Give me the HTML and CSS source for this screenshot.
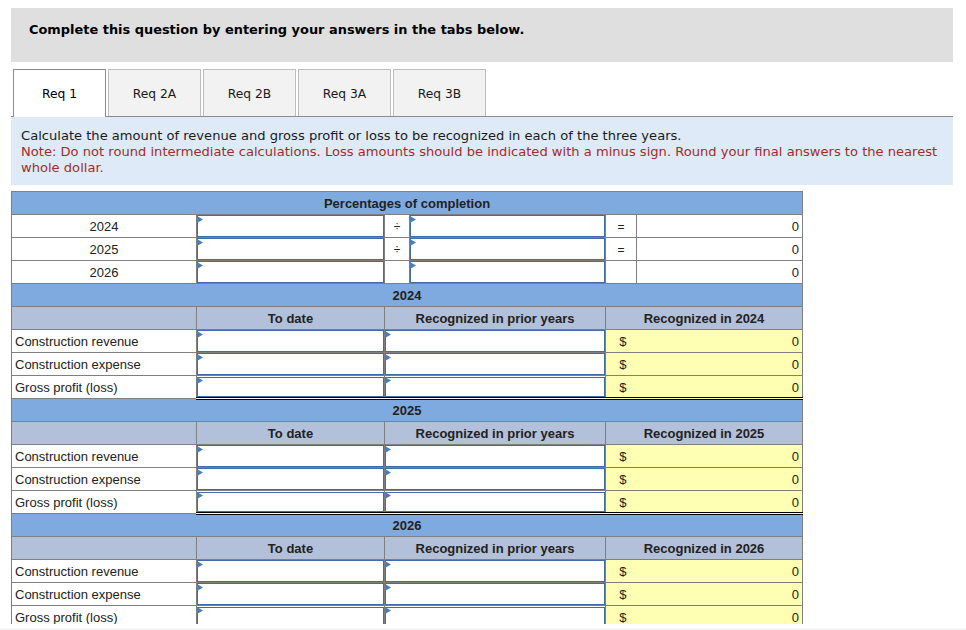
FILE: index.html
```html
<!DOCTYPE html>
<html lang="en">
<head>
<meta charset="utf-8">
<title>Req 1</title>
<link rel="stylesheet" href="styles.css">
</head>
<body>
<main class="page">
  <div class="banner">Complete this question by entering your answers in the tabs below.</div>
  <nav class="tabs">
    <div class="tab active">Req 1</div>
    <div class="tab">Req 2A</div>
    <div class="tab">Req 2B</div>
    <div class="tab">Req 3A</div>
    <div class="tab">Req 3B</div>
  </nav>
  <section class="prompt">
    <div>Calculate the amount of revenue and gross profit or loss to be recognized in each of the three years.</div>
    <div class="note">Note: Do not round intermediate calculations. Loss amounts should be indicated with a minus sign. Round your final answers to the nearest whole dollar.</div>
  </section>
  <table class="sheet">
    <colgroup>
      <col class="c1"><col class="c2"><col class="c3"><col class="c4"><col class="c5"><col class="c6">
    </colgroup>
    <tbody>
      <tr class="band"><td colspan="6">Percentages of completion</td></tr>
      <tr><td class="year">2024</td><td class="in"><input></td><td class="op">÷</td><td class="in"><input></td><td class="op">=</td><td class="num">0</td></tr>
      <tr><td class="year">2025</td><td class="in"><input></td><td class="op">÷</td><td class="in"><input></td><td class="op">=</td><td class="num">0</td></tr>
      <tr><td class="year">2026</td><td class="in"><input></td><td class="op"></td><td class="in"><input></td><td class="op"></td><td class="num">0</td></tr>

      <tr class="band"><td colspan="6">2024</td></tr>
      <tr class="head"><td></td><td>To date</td><td colspan="2">Recognized in prior years</td><td colspan="2">Recognized in 2024</td></tr>
      <tr><td class="label">Construction revenue</td><td class="in"><input></td><td class="in" colspan="2"><input></td><td class="cur">$</td><td class="res">0</td></tr>
      <tr><td class="label">Construction expense</td><td class="in"><input></td><td class="in" colspan="2"><input></td><td class="cur">$</td><td class="res">0</td></tr>
      <tr class="total"><td class="label">Gross profit (loss)</td><td class="in"><input></td><td class="in" colspan="2"><input></td><td class="cur">$</td><td class="res">0</td></tr>

      <tr class="band"><td colspan="6">2025</td></tr>
      <tr class="head"><td></td><td>To date</td><td colspan="2">Recognized in prior years</td><td colspan="2">Recognized in 2025</td></tr>
      <tr><td class="label">Construction revenue</td><td class="in"><input></td><td class="in" colspan="2"><input></td><td class="cur">$</td><td class="res">0</td></tr>
      <tr><td class="label">Construction expense</td><td class="in"><input></td><td class="in" colspan="2"><input></td><td class="cur">$</td><td class="res">0</td></tr>
      <tr class="total"><td class="label">Gross profit (loss)</td><td class="in"><input></td><td class="in" colspan="2"><input></td><td class="cur">$</td><td class="res">0</td></tr>

      <tr class="band"><td colspan="6">2026</td></tr>
      <tr class="head"><td></td><td>To date</td><td colspan="2">Recognized in prior years</td><td colspan="2">Recognized in 2026</td></tr>
      <tr><td class="label">Construction revenue</td><td class="in"><input></td><td class="in" colspan="2"><input></td><td class="cur">$</td><td class="res">0</td></tr>
      <tr><td class="label">Construction expense</td><td class="in"><input></td><td class="in" colspan="2"><input></td><td class="cur">$</td><td class="res">0</td></tr>
      <tr class="total"><td class="label">Gross profit (loss)</td><td class="in"><input></td><td class="in" colspan="2"><input></td><td class="cur">$</td><td class="res">0</td></tr>
    </tbody>
  </table>
</main>
<div class="edge"></div>
</body>
</html>
```
FILE: styles.css
```css
* { box-sizing: border-box; }
html, body { margin: 0; padding: 0; height: 630px; overflow: hidden; background: #fff; }
.page {
  height: 624px;
  overflow: hidden;
  padding: 8px 13px 0 11px;
  font-family: "DejaVu Sans", Verdana, sans-serif;
  color: #000;
}
.edge { height: 2px; margin-top: 4px; background: #f5f5f5; }
.banner {
  height: 54px;
  background: #dfdfdf;
  padding: 13px 18px 0;
  font-size: 12.93px;
  line-height: 17px;
  font-weight: 700;
}
.tabs {
  display: flex;
  gap: 2px;
  margin: 7px 0 0 2px;
  height: 47px;
}
.tab {
  width: 93px;
  height: 47px;
  background: #f2f2f2;
  border: 1px solid #bdbdbd;
  border-bottom: 0;
  font-size: 12.3px;
  line-height: 48px;
  text-align: center;
  color: #1a1a1a;
}
.tab.active {
  height: 48px;
  background: #fff;
  border: 1px solid #8c8c8c;
  border-bottom: 0;
  position: relative;
  z-index: 1;
  color: #000;
}
.prompt {
  height: 69px;
  background: #deeaf8;
  border-top: 1px solid #8c8c8c;
  padding: 11px 10px 0;
  font-size: 13.08px;
  line-height: 16px;
  color: #1a1a1a;
}
.note { color: #a52a2a; }
.sheet {
  margin-top: 6px;
  width: 791px;
  table-layout: fixed;
  border-collapse: collapse;
  font-family: "Liberation Sans", Arial, sans-serif;
  font-size: 13px;
  color: #222;
}
.c1 { width: 185px; }
.c2 { width: 188px; }
.c3 { width: 25px; }
.c4 { width: 196px; }
.c5 { width: 31px; }
.c6 { width: 166px; }
.sheet tr { height: 23px; }
.sheet td {
  height: 23px;
  padding: 2px 0 0;
  border: 1px solid #7f7f7f;
  line-height: 20px;
  vertical-align: middle;
}
.band td {
  background: #7faadf;
  text-align: center;
  font-weight: 700;
}
.head td {
  background: #b3c0d9;
  text-align: center;
  font-weight: 700;
}
.year { text-align: center; }
.sheet .label { padding-left: 3px; }
.sheet .op { text-align: center; font-size: 12px; }
.sheet .num { text-align: right; padding-right: 3px; }
.sheet .in { position: relative; padding: 0; }
.sheet .in input {
  display: block;
  width: 100%;
  height: 22px;
  margin: 0;
  padding: 0;
  border: 1px solid #416ca8;
  border-radius: 0;
  background: #fff;
  outline: 0;
}
.sheet .in::before {
  content: "";
  position: absolute;
  left: 0;
  top: 1px;
  width: 6px;
  height: 7px;
  background: #4a7dc0;
  clip-path: polygon(0 0, 100% 50%, 0 100%);
}
.sheet .cur {
  background: #ffffb3;
  border-right: 0;
  text-align: right;
  padding-right: 10px;
}
.sheet .res {
  background: #ffffb3;
  border-left: 0;
  text-align: right;
  padding-right: 3px;
}
.total td { height: 22px; line-height: 19px; }
.total td.in, .total td.cur, .total td.res { border-top: 1px solid #000; border-bottom: 3px double #000; }
.total .in input { height: 20px; }
.total td.label { padding-top: 1px; }
.total + .band td { padding-top: 0; line-height: 19px; }
```
